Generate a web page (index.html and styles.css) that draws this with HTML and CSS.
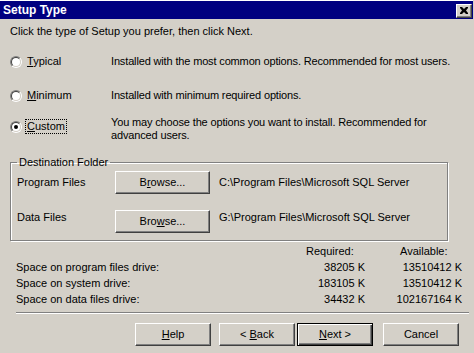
FILE: index.html
```html
<!DOCTYPE html>
<html lang="en">
<head>
<meta charset="utf-8">
<title>Setup Type</title>
<link rel="stylesheet" href="styles.css">
</head>
<body>
<div class="dialog">
  <div class="titlebar">
    <span class="title">Setup Type</span>
    <span class="close" aria-label="Close"><svg width="8" height="7" viewBox="0 0 8 7"><path d="M0 0h2l2 2 2-2h2v1L6 3.5 8 6v1H6L4 5 2 7H0V6l2-2.5L0 1z" fill="#000"/></svg></span>
  </div>
  <p class="intro">Click the type of Setup you prefer, then click Next.</p>

  <div class="options">
    <div class="option opt-typical">
      <label class="radio"><span class="dot"><span class="dot-in"></span></span><span class="lbl"><u>T</u>ypical</span></label>
      <div class="desc">Installed with the most common options. Recommended for most users.</div>
    </div>
    <div class="option opt-minimum">
      <label class="radio"><span class="dot"><span class="dot-in"></span></span><span class="lbl"><u>M</u>inimum</span></label>
      <div class="desc">Installed with minimum required options.</div>
    </div>
    <div class="option opt-custom">
      <label class="radio"><span class="dot"><span class="dot-in"><span class="pip"></span></span></span><span class="lbl focus"><u>C</u>ustom</span></label>
      <div class="desc">You may choose the options you want to install. Recommended for<br>advanced users.</div>
    </div>
  </div>

  <fieldset class="group">
    <legend>Destination Folder</legend>
    <div class="folder-row row-program">
      <span class="flabel">Program Files</span>
      <button class="btn browse" type="button">B<u>r</u>owse...</button>
      <span class="path">C:\Program Files\Microsoft SQL Server</span>
    </div>
    <div class="folder-row row-data">
      <span class="flabel">Data Files</span>
      <button class="btn browse" type="button">Bro<u>w</u>se...</button>
      <span class="path">G:\Program Files\Microsoft SQL Server</span>
    </div>
  </fieldset>

  <div class="space">
    <span></span><span class="head">Required:</span><span></span><span class="head avail">Available:</span>
    <span>Space on program files drive:</span><span class="num">38205 K</span><span></span><span class="num">13510412 K</span>
    <span>Space on system drive:</span><span class="num">183105 K</span><span></span><span class="num">13510412 K</span>
    <span>Space on data files drive:</span><span class="num">34432 K</span><span></span><span class="num">102167164 K</span>
  </div>

  <div class="sep"></div>

  <div class="buttons">
    <button class="btn cmd b-help" type="button"><u>H</u>elp</button>
    <button class="btn cmd b-back" type="button">&lt; <u>B</u>ack</button>
    <button class="btn cmd b-next default" type="button"><u>N</u>ext &gt;</button>
    <button class="btn cmd b-cancel" type="button">Cancel</button>
  </div>
</div>
</body>
</html>
```

FILE: styles.css
```css
* { box-sizing: border-box; }

html, body {
  margin: 0;
  padding: 0;
}

body {
  width: 474px;
  height: 353px;
  overflow: hidden;
  background: #d4d0c8;
  color: #000;
  font-family: "Liberation Sans", Arial, sans-serif;
  font-size: 11px;
  line-height: 13px;
}

.dialog {
  width: 474px;
  height: 353px;
}

.titlebar {
  height: 19px;
  width: 473px;
  border-top: 1px solid #ffffff;
  background: #000080;
  color: #ffffff;
  display: flex;
  align-items: center;
  justify-content: space-between;
  padding: 0 1px 0 3px;
}

.title {
  font-weight: bold;
  font-size: 12px;
  line-height: 18px;
}

.close {
  width: 16px;
  height: 14px;
  margin-top: 1px;
  background: #d4d0c8;
  border: 1px solid;
  border-color: #ffffff #404040 #404040 #ffffff;
  box-shadow: inset -1px -1px #808080;
  display: flex;
  align-items: center;
  justify-content: center;
  padding: 0 1px 1px 0;
}

.close svg { display: block; }

.intro {
  margin: 6px 0 0 10px;
}

.options {
  margin-top: 17px;
  padding-left: 10px;
}

.option {
  display: grid;
  grid-template-columns: 101px 1fr;
  align-items: start;
}

.desc { letter-spacing: -0.15px; }

.opt-minimum { margin-top: 21px; }
.opt-custom { margin-top: 14px; }
.opt-custom .radio { padding-top: 4px; }

.radio {
  display: flex;
  align-items: center;
  gap: 5px;
}

.dot {
  width: 12px;
  height: 12px;
  border-radius: 50%;
  border: 1px solid;
  border-color: #808080 #ffffff #ffffff #808080;
  display: flex;
  align-items: center;
  justify-content: center;
}

.dot-in {
  width: 10px;
  height: 10px;
  border-radius: 50%;
  border: 1px solid;
  border-color: #404040 #d4d0c8 #d4d0c8 #404040;
  background: #ffffff;
  display: flex;
  align-items: center;
  justify-content: center;
}

.pip {
  width: 4px;
  height: 4px;
  border-radius: 50%;
  background: #000;
}

.lbl u, .btn u { text-decoration-thickness: 1px; text-underline-offset: 1px; }

.focus {
  outline: 1px dotted #000;
  outline-offset: 0;
  padding: 0 1px;
  margin-left: -1px;
}

.group {
  margin: 14px 0 0 10px;
  padding: 0 0 7px 0;
  width: 438px;
  border: 1px solid #808080;
  box-shadow: inset 1px 1px #ffffff, 1px 1px #ffffff;
}

.group legend {
  margin-left: 6px;
  padding: 0 2px;
  line-height: 13px;
}

.folder-row {
  display: flex;
  align-items: flex-start;
  padding-left: 6px;
}

.row-program { margin-top: 2px; }
.row-program .flabel,
.row-program .path { padding-top: 5px; }

.row-data { margin-top: 16px; }
.row-data .flabel,
.row-data .path { padding-top: 1px; }

.flabel { width: 98px; }

.path { margin-left: 9px; }

.btn {
  height: 23px;
  padding: 0;
  margin: 0;
  background: #d4d0c8;
  border: 1px solid;
  border-color: #ffffff #404040 #404040 #ffffff;
  box-shadow: inset -1px -1px #808080;
  font-family: "Liberation Sans", Arial, sans-serif;
  font-size: 11px;
  color: #000;
  line-height: 13px;
}

.browse { width: 95px; }

.space {
  display: grid;
  grid-template-columns: 290px 59px 25px 72px;
  padding-left: 16px;
  margin-top: 2px;
  line-height: 16px;
  white-space: nowrap;
}

.space .num { text-align: right; }
.space .avail { padding-left: 10px; }

.sep {
  margin: 5px 5px 0 16px;
  height: 2px;
  border-top: 1px solid #808080;
  border-bottom: 1px solid #ffffff;
}

.buttons {
  display: flex;
  padding-left: 135px;
  margin-top: 9px;
}

.cmd { width: 76px; }
.b-back { margin-left: 8px; }
.b-next { margin-left: 2px; }
.b-cancel { margin-left: 10px; }

.default {
  border-color: #000;
  box-shadow: inset 1px 1px #ffffff, inset -1px -1px #404040, inset -2px -2px #808080;
}
```
